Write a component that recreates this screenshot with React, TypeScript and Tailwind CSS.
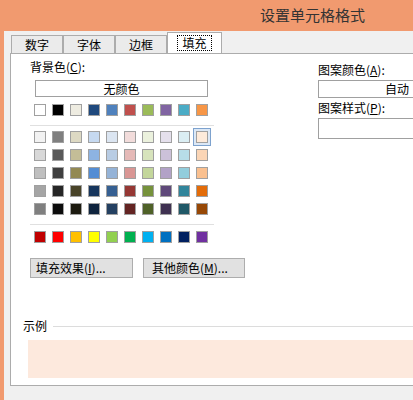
import React from 'react';

const row1 = ['#ffffff','#000000','#eeece1','#1f497d','#4f81bd','#c0504d','#9bbb59','#8064a2','#4bacc6','#f79646'];
const grid = [
  ['#f2f2f2','#7f7f7f','#ddd9c3','#c6d9f0','#dbe5f1','#f2dcdb','#ebf1dd','#e5e0ec','#dbeef3','#fdeada'],
  ['#d8d8d8','#595959','#c4bd97','#8db3e2','#b8cce4','#e5b9b7','#d7e3bc','#ccc1d9','#b7dde8','#fbd5b5'],
  ['#bfbfbf','#3f3f3f','#938953','#548dd4','#95b3d7','#d99694','#c3d69b','#b2a2c7','#92cddc','#fac08f'],
  ['#a5a5a5','#262626','#494429','#17365d','#366092','#953734','#76923c','#5f497a','#31859b','#e36c09'],
  ['#7f7f7f','#0c0c0c','#1d1b10','#0f243e','#244061','#632423','#4f6128','#3f3151','#205867','#974806'],
];
const standard = ['#c00000','#ff0000','#ffc000','#ffff00','#92d050','#00b050','#00b0f0','#0070c0','#002060','#7030a0'];

const Swatch = ({ c, sel }: { c: string; sel?: boolean }) => (
  <div className={`w-[18px] h-[18px] flex items-center justify-center ${sel ? 'border border-[#7da2ce] bg-[#dce8f6]' : ''}`}>
    <div className="w-[12px] h-[12px] border border-[#a0a0a0]" style={{ background: c }} />
  </div>
);

const Row = ({ colors, selLast }: { colors: string[]; selLast?: boolean }) => (
  <div className="flex">
    {colors.map((c, i) => <Swatch key={i} c={c} sel={selLast && i === colors.length - 1} />)}
  </div>
);

export default function App() {
  return (
    <div className="w-[413px] h-[400px] bg-[#f19a6f] flex flex-col overflow-hidden text-[12px] text-black"
      style={{ fontFamily: '"Noto Sans CJK SC", sans-serif' }}>
      <div className="h-[31px] shrink-0 flex items-center pl-[260px] text-[15px] text-[#333]">设置单元格格式</div>
      <div className="flex-1 ml-[4px] bg-[#f0f0f0] flex flex-col">
        <div className="flex items-end h-[21px] pl-[7px] mt-[1px]">
          {['数字','字体','边框'].map(t => (
            <div key={t} className="h-[18px] w-[52px] border border-[#acacac] border-b-0 bg-[#ebebeb] flex items-center justify-center">{t}</div>
          ))}
          <div className="h-[21px] w-[55px] border border-[#acacac] border-b-0 bg-white flex items-center justify-center">
            <span className="border border-dotted border-black px-[4px] leading-[14px]">填充</span>
          </div>
        </div>
        <div className="ml-[6px] bg-white border-l border-t border-b border-[#acacac] h-[333px] flex flex-col">
          <div className="flex">
            <div className="pl-[19px] pt-[5px] w-[300px]">
              <div className="leading-[16px]">背景色(<u>C</u>):</div>
              <div className="mt-[5px] ml-[5px] w-[173px] h-[17px] border border-[#a0a0a0] flex items-center justify-center leading-none">无颜色</div>
              <div className="mt-[4px] ml-[1px]"><Row colors={row1} /></div>
              <div className="mt-[6px] w-[184px] border-t border-[#e0e0e0]" />
              <div className="mt-[2px] ml-[1px]">
                {grid.map((r, i) => <Row key={i} colors={r} selLast={i === 0} />)}
              </div>
              <div className="mt-[6px] w-[184px] border-t border-[#e0e0e0]" />
              <div className="mt-[3px] ml-[1px]"><Row colors={standard} /></div>
              <div className="mt-[12px] flex gap-[10px]">
                <div className="w-[103px] h-[20px] border border-[#adadad] bg-[#e1e1e1] flex items-center pl-[5px]">填充效果(<u>I</u>)...</div>
                <div className="w-[102px] h-[20px] border border-[#adadad] bg-[#e1e1e1] flex items-center pl-[8px]">其他颜色(<u>M</u>)...</div>
              </div>
            </div>
            <div className="pt-[8px] flex-1 ml-[7px]">
              <div className="leading-[16px]">图案颜色(<u>A</u>):</div>
              <div className="mt-[2px] h-[18px] border border-[#a0a0a0] border-r-0 flex items-center pl-[66px] leading-none">自动</div>
              <div className="mt-[2px] leading-[16px]">图案样式(<u>P</u>):</div>
              <div className="mt-[2px] h-[21px] border border-[#a0a0a0] border-r-0" />
            </div>
          </div>
          <div className="mt-[40px] pl-[12px] flex items-center">
            <span className="leading-[16px]">示例</span>
            <div className="flex-1 ml-[6px] border-t border-[#dcdcdc]" />
          </div>
          <div className="mt-[6px] ml-[17px] h-[38px] bg-[#fde9dd]" />
        </div>
      </div>
    </div>
  );
}
